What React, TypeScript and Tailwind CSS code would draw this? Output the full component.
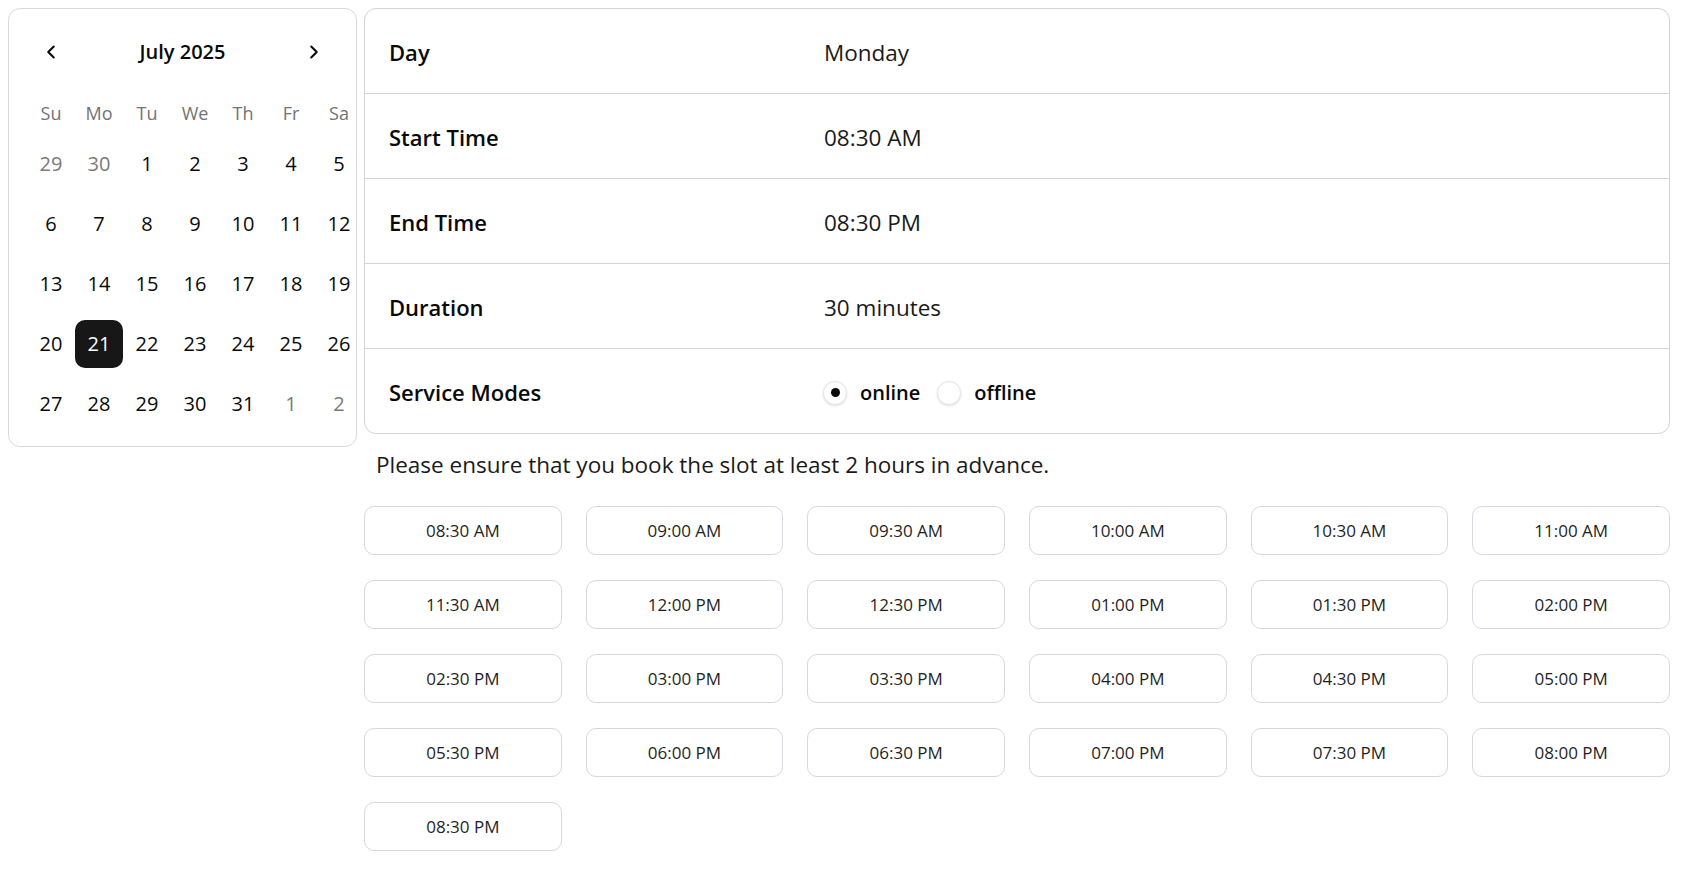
import { ChevronLeft, ChevronRight } from "lucide-react";

const weekDays = ["Su", "Mo", "Tu", "We", "Th", "Fr", "Sa"];

const days = [
  { d: 29, out: true }, { d: 30, out: true },
  ...Array.from({ length: 31 }, (_, i) => ({ d: i + 1, out: false })),
  { d: 1, out: true }, { d: 2, out: true },
];

const details = [
  { label: "Day", value: "Monday" },
  { label: "Start Time", value: "08:30 AM" },
  { label: "End Time", value: "08:30 PM" },
  { label: "Duration", value: "30 minutes" },
];

const slots = [
  "08:30 AM", "09:00 AM", "09:30 AM", "10:00 AM", "10:30 AM", "11:00 AM",
  "11:30 AM", "12:00 PM", "12:30 PM", "01:00 PM", "01:30 PM", "02:00 PM",
  "02:30 PM", "03:00 PM", "03:30 PM", "04:00 PM", "04:30 PM", "05:00 PM",
  "05:30 PM", "06:00 PM", "06:30 PM", "07:00 PM", "07:30 PM", "08:00 PM",
  "08:30 PM",
];

function Calendar() {
  return (
    <div className="w-[349px] shrink-0 self-start rounded-xl border border-[#d9d9d9] bg-white px-[18px] pt-[19px] pb-[18px]">
      {/* header */}
      <div className="flex h-12 items-center justify-between">
        <button className="flex h-12 w-12 items-center justify-center text-[#0a0a0a]">
          <ChevronLeft size={22} strokeWidth={2.25} />
        </button>
        <span className="text-[20px] font-semibold text-[#0a0a0a]">July 2025</span>
        <button className="flex h-12 w-12 items-center justify-center text-[#0a0a0a]">
          <ChevronRight size={22} strokeWidth={2.25} />
        </button>
      </div>

      {/* grid */}
      <div className="mt-[22px] grid w-[336px] grid-cols-[repeat(7,48px)]">
        {weekDays.map((w) => (
          <div key={w} className="flex h-[30px] items-center justify-center text-[18px] text-[#737373]">
            {w}
          </div>
        ))}
      </div>
      <div className="mt-3 grid w-[336px] grid-cols-[repeat(7,48px)] gap-y-3">
        {days.map((day, i) => {
          const selected = !day.out && day.d === 21;
          return (
            <div
              key={i}
              className={
                selected
                  ? "flex h-12 w-12 items-center justify-center rounded-[10px] bg-[#171717] text-[20px] text-white"
                  : day.out
                  ? "flex h-12 w-12 items-center justify-center text-[20px] text-[#7a7a7a]"
                  : "flex h-12 w-12 items-center justify-center text-[20px] text-[#0a0a0a]"
              }
            >
              {day.d}
            </div>
          );
        })}
      </div>
    </div>
  );
}

function Radio({ checked, label }: { checked: boolean; label: string }) {
  return (
    <label className="flex items-center gap-[13px]">
      <span className="flex h-6 w-6 items-center justify-center rounded-full border border-[#e5e5e5] bg-white shadow-sm">
        {checked && <span className="h-[9px] w-[9px] rounded-full bg-[#0a0a0a]" />}
      </span>
      <span className="text-[20px] font-semibold text-[#0a0a0a]">{label}</span>
    </label>
  );
}

export default function App() {
  return (
    <div className="flex min-h-screen gap-[7px] bg-white p-2 font-['Open_Sans',sans-serif]">
      <Calendar />

      <div className="w-[1306px]">
        {/* details table */}
        <div className="overflow-hidden rounded-xl border border-[#d4d4d4]">
          {details.map((row) => (
            <div key={row.label} className="grid h-[85px] grid-cols-[459px_1fr] items-center border-b border-[#d4d4d4] pt-[3px]">
              <div className="pl-6 text-[22px] font-semibold text-[#0a0a0a]">{row.label}</div>
              <div className="text-[22.5px] text-[#1a1a1a]">{row.value}</div>
            </div>
          ))}
          <div className="grid h-[84px] grid-cols-[458px_1fr] items-center pt-[3px]">
            <div className="pl-6 text-[22px] font-semibold text-[#0a0a0a]">Service Modes</div>
            <div className="flex items-center gap-[17px]">
              <Radio checked label="online" />
              <Radio checked={false} label="offline" />
            </div>
          </div>
        </div>

        <p className="mt-[16px] pl-3 text-[22.5px] leading-[30px] text-[#1a1a1a]">
          Please ensure that you book the slot at least 2 hours in advance.
        </p>

        {/* slots */}
        <div className="mt-[26px] grid grid-cols-6 gap-x-6 gap-y-[25px]">
          {slots.map((s) => (
            <button
              key={s}
              className="h-[49px] rounded-[10px] border border-[#d5d8de] bg-white text-[17px] text-[#1f1f1f]"
            >
              {s}
            </button>
          ))}
        </div>
      </div>
    </div>
  );
}
